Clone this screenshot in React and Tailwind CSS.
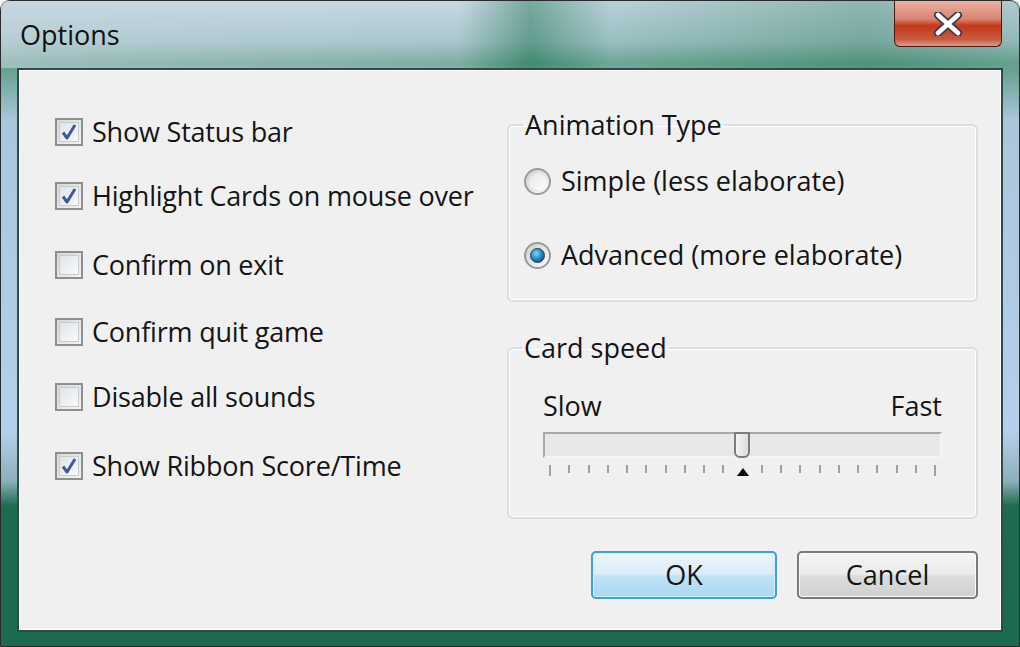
import React from "react";

const font = { fontFamily: '"Open Sans", "Noto Sans", sans-serif' };

const CheckBox = ({ checked }) => (
  <div className="w-[28px] h-[28px] border-2 border-[#8e8f8f] bg-[linear-gradient(135deg,#d8d8d8,#f4f4f4)] p-[2px] shrink-0">
    <div className="w-full h-full border border-[#c6cbd0] bg-[linear-gradient(135deg,#dfe3e8,#fafafa)] flex items-center justify-center">
      {checked && (
        <svg width="18" height="18" viewBox="0 0 18 18">
          <path d="M3 9.5 L7 15 L15 2" fill="none" stroke="#4257a3" strokeWidth="3" strokeLinejoin="round" />
        </svg>
      )}
    </div>
  </div>
);

const Radio = ({ checked }) => (
  <div className="w-[27px] h-[27px] rounded-full border-2 border-[#9a9a9a] bg-[linear-gradient(135deg,#cfcfcf,#fbfbfb)] flex items-center justify-center shrink-0">
    {checked ? (
      <div className="w-[15px] h-[15px] rounded-full bg-[radial-gradient(circle_at_40%_35%,#7fd4f7,#1b7db8_55%,#0b3a5e)] border border-[#1d3b52]" />
    ) : (
      <div className="w-[17px] h-[17px] rounded-full bg-[linear-gradient(135deg,#e4e4e4,#ffffff)]" />
    )}
  </div>
);

const options = [
  { label: "Show Status bar", checked: true, mt: "mt-0" },
  { label: "Highlight Cards on mouse over", checked: true, mt: "mt-[36px]" },
  { label: "Confirm on exit", checked: false, mt: "mt-[41px]" },
  { label: "Confirm quit game", checked: false, mt: "mt-[39px]" },
  { label: "Disable all sounds", checked: false, mt: "mt-[37px]" },
  { label: "Show Ribbon Score/Time", checked: true, mt: "mt-[41px]" },
];

const ticks = Array.from({ length: 21 }, (_, i) => i);

export default function App() {
  return (
    <div style={font} className="w-[1020px] h-[647px] overflow-hidden bg-white">
      <div className="relative w-full h-full rounded-t-[10px] border border-[#2a2a2a] bg-[linear-gradient(to_bottom,#c9d9e4_0px,#9cc0c4_40px,#5e9b86_62px,#a9c7dc_120px,#b4d0ec_430px,#8cb0b8_480px,#1f6a50_505px,#1c6a4f_100%)] flex flex-col">
        {/* title bar */}
        <div className="h-[67px] shrink-0 flex items-start justify-between bg-[linear-gradient(to_right,rgba(200,214,224,0.6)_0%,rgba(200,214,224,0.3)_45%,rgba(40,120,90,0.5)_52%,rgba(150,190,190,0.3)_60%,rgba(60,130,100,0.4)_85%,rgba(120,170,160,0.3)_100%)]">
          <span className="ml-[19px] mt-[17px] text-[27px] leading-[34px] text-[#111]">Options</span>
          <div className="mr-[17px] w-[108px] h-[46px] rounded-b-[6px] border border-t-0 border-[#4a1a10] bg-[linear-gradient(to_bottom,#eab1a3_0%,#d98472_40%,#c3381a_55%,#c85a3f_85%,#e09a86_100%)] flex items-center justify-center">
            <svg width="30" height="24" viewBox="0 0 30 24">
              <path d="M5 3 L25 21 M25 3 L5 21" stroke="#3a3a4a" strokeWidth="8" strokeLinecap="round" />
              <path d="M5 3 L25 21 M25 3 L5 21" stroke="#ffffff" strokeWidth="4.5" strokeLinecap="round" />
            </svg>
          </div>
        </div>

        {/* client area */}
        <div className="flex-1 mx-[16px] mb-[14px] border-2 border-[#2f4a48] bg-white p-[1px]">
          <div className="w-full h-full bg-[#f0f0f0] flex flex-col pl-[35px] pr-[22px] pt-[47px]">
            <div className="flex">
              <div className="w-[452px] flex flex-col">
                {options.map((o) => (
                  <label key={o.label} className={`flex items-center gap-[9px] ${o.mt}`}>
                    <CheckBox checked={o.checked} />
                    <span className="text-[27px] leading-[28px] text-[#141414] tracking-[-0.2px]">{o.label}</span>
                  </label>
                ))}
              </div>

              <div className="flex-1 flex flex-col -mt-[8px]">
                <fieldset className="h-[192px] border-2 border-[#d6dfe6] rounded-[6px] px-[15px] shadow-[inset_0_0_0_1px_#ffffff]">
                  <legend className="px-[2px] ml-[-1px] text-[27px] leading-[30px] text-[#141414]">Animation Type</legend>
                  <div className="flex items-center gap-[10px] mt-[27px]">
                    <Radio checked={false} />
                    <span className="text-[27px] leading-[28px] text-[#141414]">Simple (less elaborate)</span>
                  </div>
                  <div className="flex items-center gap-[10px] mt-[46px]">
                    <Radio checked={true} />
                    <span className="text-[27px] leading-[28px] text-[#141414]">Advanced (more elaborate)</span>
                  </div>
                </fieldset>

                <fieldset className="mt-[31px] h-[186px] border-2 border-[#d6dfe6] rounded-[6px] pl-[34px] pr-[34px] shadow-[inset_0_0_0_1px_#ffffff]">
                  <legend className="px-[2px] ml-[-21px] text-[27px] leading-[30px] text-[#141414]">Card speed</legend>
                  <div className="flex justify-between mt-[29px] text-[27px] leading-[28px] text-[#141414]">
                    <span>Slow</span>
                    <span>Fast</span>
                  </div>
                  <div className="mt-[12px] h-[26px] border-2 border-[#a8a8a8] border-r-[#f4f4f4] border-b-[#f4f4f4] bg-[#e8e8e8] flex items-center">
                    <div className="ml-[189px] w-[16px] h-[26px] -mt-[1px] rounded-b-[6px] border-2 border-[#7c7c7c] bg-[linear-gradient(to_right,#f4f4f4,#dcdcdc)]" />
                  </div>
                  <div className="mt-[7px] flex justify-between px-[6px] items-start h-[12px]">
                    {ticks.map((t) =>
                      t === 10 ? (
                        <svg key={t} width="12" height="8" viewBox="0 0 12 8" className="mt-[3px] -mx-[5px]">
                          <path d="M6 0 L12 8 L0 8 Z" fill="#000" />
                        </svg>
                      ) : (
                        <div key={t} className={`w-[2px] ${t === 0 || t === 20 ? "h-[11px]" : "h-[8px]"} bg-[#a0a0a0]`} />
                      )
                    )}
                  </div>
                </fieldset>
              </div>
            </div>

            <div className="mt-auto mb-[30px] flex justify-end gap-[20px]">
              <button className="w-[186px] h-[48px] rounded-[5px] border-2 border-[#3fa0d8] bg-[linear-gradient(to_bottom,#ecf6fc_0%,#dcecfa_48%,#c1e3f7_52%,#a8d8f3_100%)] shadow-[inset_0_0_0_1px_#d8f3ff] text-[27px] text-[#141414]">
                OK
              </button>
              <button className="w-[181px] h-[48px] rounded-[5px] border-2 border-[#7a7a7a] bg-[linear-gradient(to_bottom,#f4f4f4_0%,#ebebeb_48%,#dcdcdc_52%,#d0d0d0_100%)] shadow-[inset_0_0_0_1px_#fbfbfb] text-[27px] text-[#141414]">
                Cancel
              </button>
            </div>
          </div>
        </div>
      </div>
    </div>
  );
}
